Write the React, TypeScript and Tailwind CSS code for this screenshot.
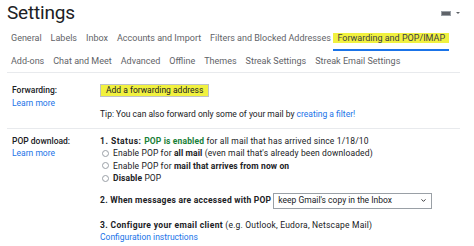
import { ChevronDown } from "lucide-react";

const row1 = ["General", "Labels", "Inbox", "Accounts and Import", "Filters and Blocked Addresses"];
const row2 = ["Add-ons", "Chat and Meet", "Advanced", "Offline", "Themes", "Streak Settings", "Streak Email Settings"];

function Radio({ children }: { children: React.ReactNode }) {
  return (
    <div className="flex items-center h-[12.5px]">
      <span className="w-[7px] h-[7px] rounded-full border border-[#9aa0a6] ml-[1.5px] mr-[4.5px]" />
      <span className="tracking-[0.12px]">{children}</span>
    </div>
  );
}

export default function App() {
  return (
    <div className="w-[474px] h-[246px] overflow-hidden bg-white text-[#202124] font-['Roboto',sans-serif] text-[8.5px] leading-[12.5px]">
      {/* Header */}
      <div className="flex items-center justify-between pl-[7px] pr-[14px] h-[24px]">
        <h1 className="text-[19px] leading-none font-normal tracking-[-0.2px]">Settings</h1>
        <div className="flex items-center gap-[5px] mt-[2px]">
          <span className="w-[10px] h-[5px] bg-[#5f6368] border border-[#9aa0a6]" />
          <span className="w-0 h-0 border-l-[2px] border-r-[2px] border-t-[2.5px] border-l-transparent border-r-transparent border-t-[#5f6368]" />
        </div>
      </div>

      {/* Tabs */}
      <div className="pl-[6.5px] text-[#5f6368] text-[9px] leading-none">
        <div className="flex items-end h-[27px]">
          {row1.map((t) => (
            <div key={t} className="px-[4.5px] h-[10px] mb-[8px] flex items-center">{t}</div>
          ))}
          <div className="ml-[-2px] border-b-2 border-[#1a73e8] pb-[6px]">
            <div className="bg-[#f1f13f] px-[4px] h-[10px] flex items-center text-[#3c4043]">Forwarding and POP/IMAP</div>
          </div>
        </div>
        <div className="flex items-center h-[21px]">
          {row2.map((t) => (
            <div key={t} className="px-[4.5px]">{t}</div>
          ))}
        </div>
      </div>
      <div className="ml-[7px] mr-[14px] border-t border-[#e8eaed]" />

      {/* Forwarding */}
      <div className="flex ml-[7px] mr-[14px] pl-[5px] pt-[11px] pb-[7px] border-b border-[#e8eaed]">
        <div className="w-[88px] shrink-0">
          <div className="h-[13px] flex items-center font-medium">Forwarding:</div>
          <div className="text-[#1a73e8] leading-[12px] mt-[-0.5px]">Learn more</div>
        </div>
        <div>
          <button className="bg-[#f1f13f] border border-[#bdc1c6] px-[5px] h-[13px] text-[8.5px] text-[#202124] leading-none">
            Add a forwarding address
          </button>
          <div className="mt-[11px]">
            Tip: You can also forward only some of your mail by{" "}
            <span className="text-[#1a73e8]">creating a filter!</span>
          </div>
        </div>
      </div>

      {/* POP download */}
      <div className="flex ml-[12px] pt-[6px]">
        <div className="w-[88px] shrink-0">
          <div className="font-medium">POP download:</div>
          <div className="text-[#1a73e8]">Learn more</div>
        </div>
        <div>
          <div className="tracking-[0.15px]">
            <span className="font-bold tracking-[0.5px]">1. Status: </span>
            <span className="text-[#188038] font-bold">POP is enabled</span> for all mail that has arrived since 1/18/10
          </div>
          <Radio>
            Enable POP for <b>all mail</b> (even mail that's already been downloaded)
          </Radio>
          <Radio>
            Enable POP for <b>mail that arrives from now on</b>
          </Radio>
          <Radio>
            <b>Disable</b> POP
          </Radio>

          <div className="flex items-center mt-[8px]">
            <span className="font-bold tracking-[0.25px] mr-[2px]">2. When messages are accessed with POP</span>
            <div className="w-[159px] h-[16px] border border-[#9aa0a6] flex items-center justify-between pl-[4px] pr-[4px]">
              <span>keep Gmail's copy in the Inbox</span>
              <ChevronDown className="w-[7px] h-[7px]" strokeWidth={3} />
            </div>
          </div>

          <div className="mt-[10px] tracking-[0.2px]">
            <span className="font-bold tracking-[0.35px]">3. Configure your email client</span> (e.g. Outlook, Eudora, Netscape Mail)
          </div>
          <div className="text-[#1a73e8] leading-[12px]">Configuration instructions</div>
        </div>
      </div>
    </div>
  );
}
